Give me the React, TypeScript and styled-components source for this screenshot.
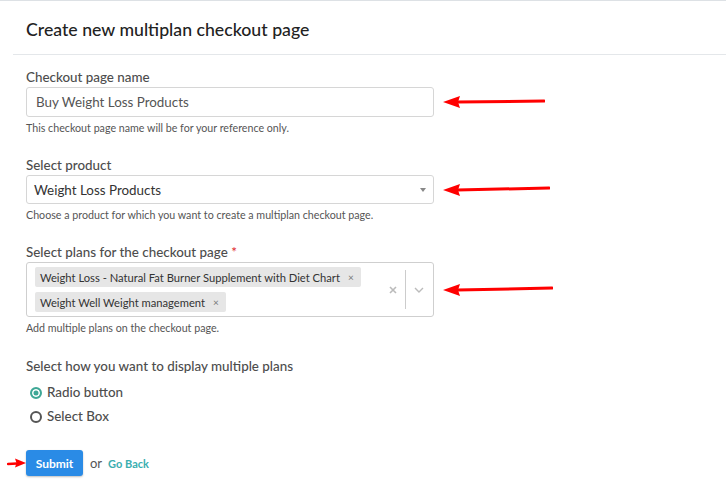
import React from "react";
import styled, { createGlobalStyle } from "styled-components";

const GlobalStyle = createGlobalStyle`
  html, body {
    margin: 0;
    padding: 0;
    background: #ffffff;
  }
  body {
    font-family: Lato, "Open Sans", sans-serif;
    color: #4a4a4a;
  }
  * {
    box-sizing: border-box;
  }
`;

const Page = styled.main`
  border-top: 1px solid #dde1e5;
  min-height: 490px;
  padding-left: 13px;
`;

const Header = styled.header`
  height: 54px;
  border-bottom: 1px solid #e4e7ea;
  padding: 18px 0 0 13px;

  h1 {
    margin: 0;
    font-size: 17.7px;
    font-weight: 500;
    color: #222;
    line-height: 22px;
  }
`;

const Form = styled.form`
  padding: 14px 0 0 13px;
`;

const Field = styled.section<{ $gap?: number }>`
  margin-bottom: ${(p) => p.$gap ?? 23}px;
`;

const Label = styled.label`
  display: block;
  font-size: 13.4px;
  font-weight: 500;
  line-height: 16px;
  color: #4d4d4d;
  margin-bottom: 2px;

  span {
    color: #e0262d;
  }
`;

const Row = styled.div`
  display: flex;
  align-items: center;
`;

const TextInput = styled.div`
  width: 408px;
  height: 30px;
  border: 1px solid #d6d6d6;
  border-radius: 3px;
  display: flex;
  align-items: center;
  padding: 0 9px;
  font-size: 13.4px;
  color: #555;
`;

const SelectBox = styled(TextInput)`
  height: 29px;
  justify-content: space-between;
  padding: 0 7px;
  color: #333;
  background: #fff;
`;

const Caret = styled.span`
  width: 0;
  height: 0;
  border-left: 3px solid transparent;
  border-right: 3px solid transparent;
  border-top: 4px solid #888;
`;

const MultiBox = styled.div`
  width: 408px;
  height: 55px;
  border: 1px solid #cfcfcf;
  border-radius: 3px;
  display: flex;
  align-items: center;
`;

const ChipList = styled.div`
  flex: 1;
  display: flex;
  flex-wrap: wrap;
  gap: 5px 0;
  padding: 3px 8px;
`;

const Chip = styled.div`
  display: flex;
  align-items: center;
  height: 20px;
  background: #e6e6e6;
  border-radius: 2px;
  font-size: 11.2px;
  color: #333;
  padding: 0 7px 0 5px;

  b {
    font-weight: 400;
    color: #777;
    margin-left: 8px;
    font-size: 10px;
  }
`;

const Indicators = styled.div`
  display: flex;
  align-items: center;
  height: 100%;
  padding: 7px 0;
`;

const Separator = styled.span`
  width: 1px;
  align-self: stretch;
  background: #ccc;
  margin: 0 7px;
`;

const Helper = styled.p`
  margin: 4px 0 0;
  font-size: 10.7px;
  line-height: 13px;
  color: #555;
`;

const RadioGroup = styled.div`
  display: flex;
  flex-direction: column;
  gap: 7px;
  margin-top: 10px;
  padding-left: 4px;
`;

const RadioRow = styled.label`
  display: flex;
  align-items: center;
  gap: 5px;
  font-size: 13.4px;
  font-weight: 500;
  color: #4d4d4d;
  line-height: 17px;
`;

const RadioDot = styled.span<{ $checked?: boolean }>`
  width: 12px;
  height: 12px;
  border-radius: 50%;
  border: 2px solid ${(p) => (p.$checked ? "#3ea796" : "#555")};
  background: ${(p) => (p.$checked ? "#3ea796" : "#fff")};
  box-shadow: ${(p) => (p.$checked ? "inset 0 0 0 1.5px #fff" : "none")};
`;

const Footer = styled.div`
  display: flex;
  align-items: center;
  margin: 25px 0 0 -19px;
  font-size: 13px;
  color: #555;
`;

const SubmitButton = styled.button`
  width: 57px;
  height: 26px;
  border: none;
  border-radius: 3px;
  background: #2a8be6;
  color: #fff;
  font-family: inherit;
  font-size: 12px;
  font-weight: 700;
  box-shadow: 0 1px 2px rgba(0, 0, 0, 0.25);
  margin-right: 7px;
`;

const BackLink = styled.a`
  color: #3aaeb0;
  font-size: 11px;
  font-weight: 700;
  margin-left: 6px;
`;

const Arrow = ({ width, tilt = 0 }: { width: number; tilt?: number }) => (
  <svg width={width} height={16} viewBox={`0 0 ${width} 16`} style={{ marginLeft: 9 }}>
    <line x1={14} y1={8} x2={width - 1} y2={8 - tilt} stroke="#f00" strokeWidth={3} strokeLinecap="round" />
    <polygon points={`0,8 17,2 15,8 17,14`} fill="#f00" />
  </svg>
);

const SmallArrow = () => (
  <svg width={19} height={12} viewBox="0 0 19 12">
    <line x1={1} y1={7} x2={10} y2={6.5} stroke="#f00" strokeWidth={2.5} strokeLinecap="round" />
    <polygon points="19,6 8,1.5 9.5,6 8,10.5" fill="#f00" />
  </svg>
);

const ClearIcon = () => (
  <svg width={10} height={10} viewBox="0 0 10 10">
    <path d="M2 2 L8 8 M8 2 L2 8" stroke="#bbb" strokeWidth={1.6} />
  </svg>
);

const ChevronIcon = () => (
  <svg width={12} height={8} viewBox="0 0 12 8" style={{ marginRight: 8 }}>
    <path d="M2 2 L6 6 L10 2" stroke="#bbb" strokeWidth={1.4} fill="none" />
  </svg>
);

export default function App() {
  return (
    <>
      <GlobalStyle />
      <Page>
        <Header>
          <h1>Create new multiplan checkout page</h1>
        </Header>
        <Form>
          <Field>
            <Label>Checkout page name</Label>
            <Row>
              <TextInput>Buy Weight Loss Products</TextInput>
              <Arrow width={102} tilt={1} />
            </Row>
            <Helper>This checkout page name will be for your reference only.</Helper>
          </Field>

          <Field>
            <Label>Select product</Label>
            <Row>
              <SelectBox>
                Weight Loss Products
                <Caret />
              </SelectBox>
              <Arrow width={107} tilt={2} />
            </Row>
            <Helper>Choose a product for which you want to create a multiplan checkout page.</Helper>
          </Field>

          <Field $gap={24}>
            <Label>
              Select plans for the checkout page <span>*</span>
            </Label>
            <Row>
              <MultiBox>
                <ChipList>
                  <Chip>
                    Weight Loss - Natural Fat Burner Supplement with Diet Chart<b>×</b>
                  </Chip>
                  <Chip>
                    Weight Well Weight management<b>×</b>
                  </Chip>
                </ChipList>
                <Indicators>
                  <ClearIcon />
                  <Separator />
                  <ChevronIcon />
                </Indicators>
              </MultiBox>
              <Arrow width={110} tilt={2} />
            </Row>
            <Helper>Add multiple plans on the checkout page.</Helper>
          </Field>

          <Field $gap={0}>
            <Label>Select how you want to display multiple plans</Label>
            <RadioGroup>
              <RadioRow>
                <RadioDot $checked />
                Radio button
              </RadioRow>
              <RadioRow>
                <RadioDot />
                Select Box
              </RadioRow>
            </RadioGroup>
          </Field>

          <Footer>
            <SmallArrow />
            <SubmitButton type="button">Submit</SubmitButton>
            or
            <BackLink>Go Back</BackLink>
          </Footer>
        </Form>
      </Page>
    </>
  );
}
